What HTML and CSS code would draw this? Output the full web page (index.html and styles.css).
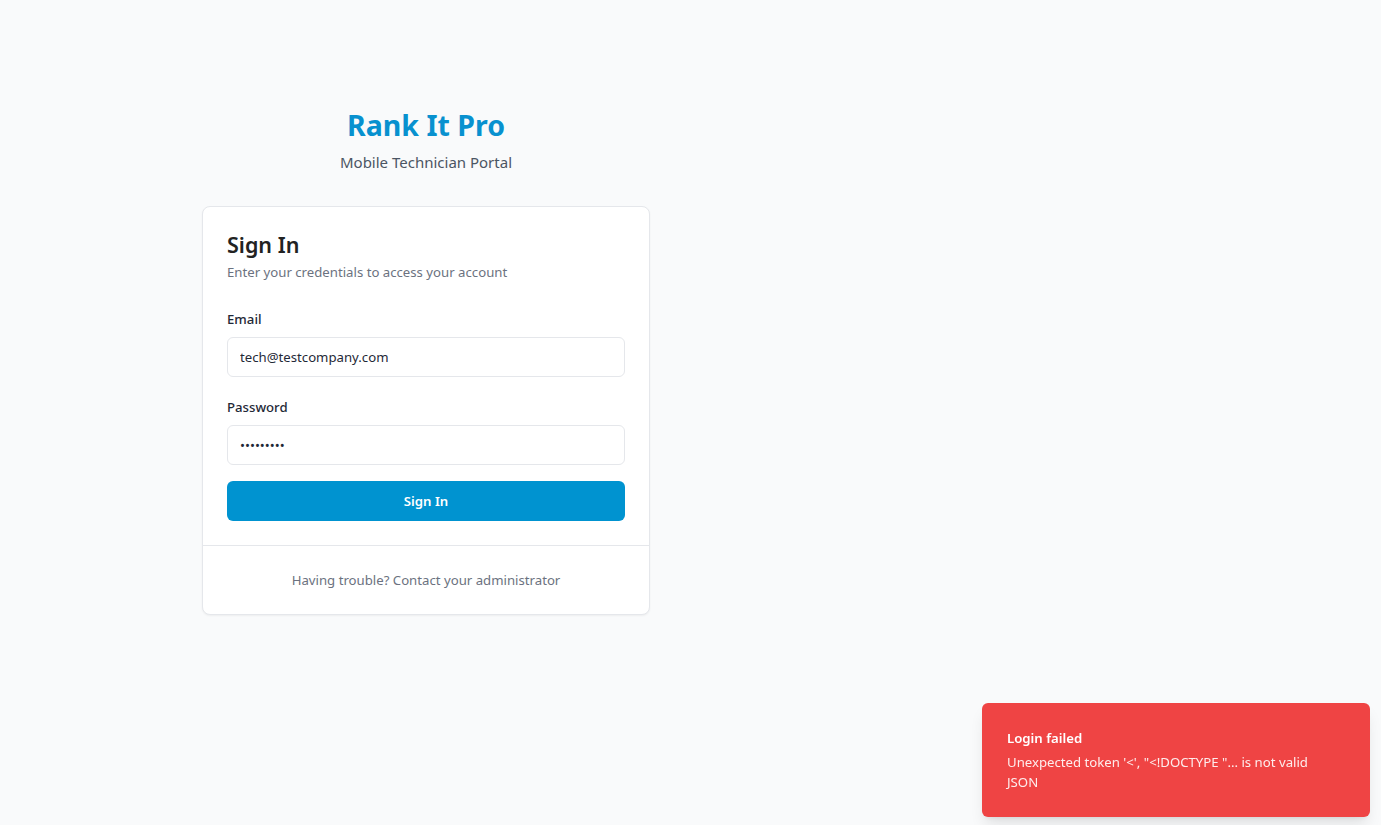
FILE: index.html
```html
<!DOCTYPE html>
<html lang="en">
<head>
<meta charset="utf-8">
<title>Rank It Pro - Sign In</title>
<link rel="stylesheet" href="styles.css">
</head>
<body>
<main class="page">
  <div class="wrap">
    <header class="brand">
      <h1 class="brand-title">Rank It Pro</h1>
      <p class="brand-sub">Mobile Technician Portal</p>
    </header>
    <section class="card">
      <div class="card-head">
        <h2 class="card-title">Sign In</h2>
        <p class="card-desc">Enter your credentials to access your account</p>
      </div>
      <form class="card-body">
        <div class="field">
          <label class="label" for="email">Email</label>
          <input class="input" id="email" type="email" value="tech@testcompany.com">
        </div>
        <div class="field">
          <label class="label" for="password">Password</label>
          <input class="input" id="password" type="password" value="password1">
        </div>
        <button class="btn" type="button">Sign In</button>
      </form>
      <div class="card-foot">
        <p class="foot-text">Having trouble? Contact your administrator</p>
      </div>
    </section>
  </div>
</main>
<div class="toast">
  <div class="toast-title">Login failed</div>
  <div class="toast-desc">Unexpected token '&lt;', "&lt;!DOCTYPE "... is not valid JSON</div>
</div>
</body>
</html>
```
FILE: styles.css
```css
* { box-sizing: border-box; }
html, body { margin: 0; padding: 0; }
body {
  background: #f9fafb;
  font-family: "Noto Sans", "Open Sans", sans-serif;
  color: #1f2937;
  min-height: 825px;
}
.page {
  display: flex;
  padding: 106px 0 0 202px;
}
.wrap {
  width: 448px;
}
.brand {
  text-align: center;
  margin-bottom: 32px;
}
.brand-title {
  margin: 0;
  font-size: 28.5px;
  line-height: 38px;
  font-weight: 700;
  color: #0891cf;
}
.brand-sub {
  margin: 6px 0 0;
  font-size: 15px;
  line-height: 24px;
  color: #4b5563;
}
.card {
  background: #fff;
  border: 1px solid #e5e7eb;
  border-radius: 8px;
  box-shadow: 0 1px 2px rgba(0,0,0,0.05);
}
.card-head {
  padding: 24px 24px 0;
}
.card-title {
  margin: 0;
  font-size: 21.5px;
  line-height: 28px;
  font-weight: 600;
  color: #222;
}
.card-desc {
  margin: 3px 0 0;
  font-size: 13.2px;
  line-height: 20px;
  color: #6b7280;
}
.card-body {
  padding: 27px 24px 24px;
  display: flex;
  flex-direction: column;
}
.field {
  display: flex;
  flex-direction: column;
  gap: 8px;
  margin-bottom: 20px;
}
.field + .field {
  margin-bottom: 16px;
}
.label {
  font-size: 13.2px;
  line-height: 20px;
  font-weight: 500;
  color: #1f2937;
}
.input {
  height: 40px;
  border: 1px solid #e5e7eb;
  border-radius: 6px;
  padding: 0 12px;
  font-family: inherit;
  font-size: 13.2px;
  color: #1f2937;
  background: #fff;
  outline: none;
}
.btn {
  height: 40px;
  border: 0;
  border-radius: 6px;
  background: #0093d0;
  color: #fff;
  font-family: inherit;
  font-size: 13.2px;
  font-weight: 600;
}
.card-foot {
  border-top: 1px solid #e5e7eb;
  padding: 24px;
  text-align: center;
}
.foot-text {
  margin: 0;
  font-size: 13.2px;
  line-height: 20px;
  color: #6b7280;
}
.toast {
  position: fixed;
  right: 11px;
  bottom: 8px;
  width: 388px;
  background: #ef4444;
  color: #fff;
  border-radius: 6px;
  padding: 25px 32px 25px 25px;
  box-shadow: 0 10px 15px -3px rgba(0,0,0,0.1), 0 4px 6px -4px rgba(0,0,0,0.1);
}
.toast-title {
  font-size: 13.2px;
  line-height: 20px;
  font-weight: 600;
}
.toast-desc {
  margin-top: 4px;
  font-size: 13.2px;
  line-height: 20px;
  opacity: 0.9;
}
```
